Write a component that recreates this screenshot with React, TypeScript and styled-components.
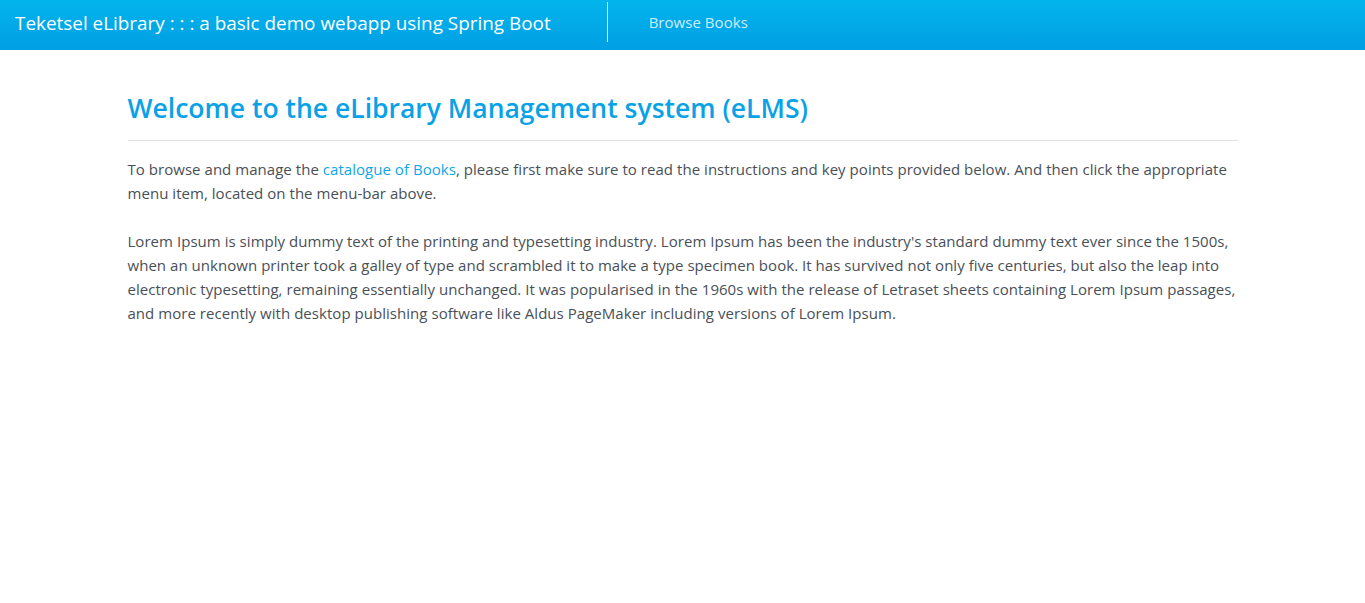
import React from "react";
import styled, { createGlobalStyle } from "styled-components";

const GlobalStyle = createGlobalStyle`
  html, body {
    margin: 0;
    padding: 0;
    background: #ffffff;
  }
  body {
    font-family: "Open Sans", "Liberation Sans", sans-serif;
    color: #495057;
  }
`;

const NavBar = styled.nav`
  display: flex;
  align-items: center;
  height: 50px;
  padding: 0 15px;
  background-image: linear-gradient(#03b4ec, #009fe3);
`;

const Brand = styled.a`
  font-size: 18.9px;
  line-height: 28px;
  color: #ffffff;
  text-decoration: none;
  margin-top: -4px;
  white-space: nowrap;
`;

const Divider = styled.span`
  align-self: flex-start;
  width: 1px;
  height: 40px;
  margin-top: 2px;
  margin-left: 56px;
  background: #f4fbff;
`;

const NavLink = styled.a`
  margin-left: 41px;
  margin-top: -6px;
  font-size: 15px;
  line-height: 24px;
  letter-spacing: 0.04px;
  color: rgba(255, 255, 255, 0.8);
  text-decoration: none;
`;

const Container = styled.main`
  max-width: 1140px;
  margin: 0 auto;
  padding: 0 15px;
  box-sizing: border-box;
`;

const Title = styled.h2`
  margin: 39px 0 0;
  font-size: 26.5px;
  line-height: 38px;
  font-weight: 600;
  color: #0aa2e6;
`;

const Rule = styled.hr`
  margin: 13px 0 16px;
  border: 0;
  border-top: 1px solid #e2e2e2;
`;

const Para = styled.p`
  margin: 0 0 24px;
  font-size: 15px;
  line-height: 24px;
  letter-spacing: 0.04px;
  color: #495057;
`;

const Link = styled.a`
  color: #10a6e8;
  text-decoration: none;
`;

export default function App() {
  return (
    <>
      <GlobalStyle />
      <NavBar>
        <Brand href="#">Teketsel eLibrary : : : a basic demo webapp using Spring Boot</Brand>
        <Divider />
        <NavLink href="#">Browse Books</NavLink>
      </NavBar>
      <Container>
        <Title>Welcome to the eLibrary Management system (eLMS)</Title>
        <Rule />
        <Para>
          To browse and manage the <Link href="#">catalogue of Books</Link>, please first make sure to read the
          instructions and key points provided below. And then click the appropriate menu item, located on the
          menu-bar above.
        </Para>
        <Para>
          Lorem Ipsum is simply dummy text of the printing and typesetting industry. Lorem Ipsum has been the
          industry's standard dummy text ever since the 1500s, when an unknown printer took a galley of type and
          scrambled it to make a type specimen book. It has survived not only five centuries, but also the leap into
          electronic typesetting, remaining essentially unchanged. It was popularised in the 1960s with the release of
          Letraset sheets containing Lorem Ipsum passages, and more recently with desktop publishing software like
          Aldus PageMaker including versions of Lorem Ipsum.
        </Para>
      </Container>
    </>
  );
}
